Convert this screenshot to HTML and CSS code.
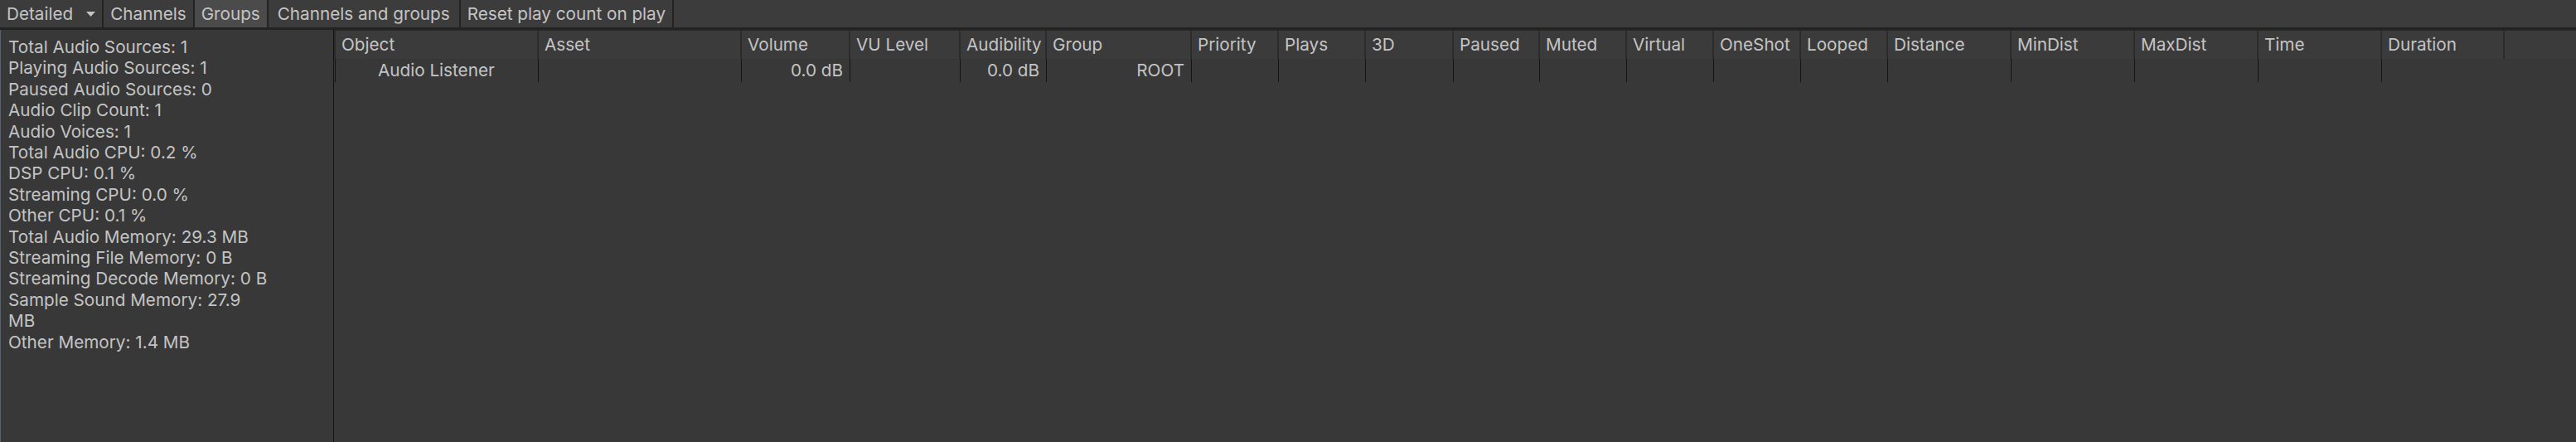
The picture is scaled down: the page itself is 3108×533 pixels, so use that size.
FILE: index.html
```html
<!DOCTYPE html>
<html lang="en">
<head>
<meta charset="utf-8">
<title>Audio Profiler</title>
<link rel="stylesheet" href="styles.css">
</head>
<body>
<div class="window">
  <div class="toolbar">
    <div class="tb-btn dropdown">
      <span>Detailed</span>
      <svg class="caret" width="11" height="6" viewBox="0 0 11 6"><polygon points="0,0 11,0 5.5,6" fill="#c4c4c4"/></svg>
    </div>
    <div class="tb-btn">Channels</div>
    <div class="tb-btn active">Groups</div>
    <div class="tb-btn wide">Channels and groups</div>
    <div class="tb-btn">Reset play count on play</div>
    <div class="tb-fill"></div>
  </div>
  <div class="main">
    <div class="stats">
      <div class="stats-list">
        <div>Total Audio Sources: 1</div>
        <div>Playing Audio Sources: 1</div>
        <div>Paused Audio Sources: 0</div>
        <div>Audio Clip Count: 1</div>
        <div>Audio Voices: 1</div>
        <div>Total Audio CPU: 0.2 %</div>
        <div>DSP CPU: 0.1 %</div>
        <div>Streaming CPU: 0.0 %</div>
        <div>Other CPU: 0.1 %</div>
        <div>Total Audio Memory: 29.3 MB</div>
        <div>Streaming File Memory: 0 B</div>
        <div>Streaming Decode Memory: 0 B</div>
        <div>Sample Sound Memory: 27.9<br>MB</div>
        <div>Other Memory: 1.4 MB</div>
      </div>
    </div>
    <div class="table">
      <div class="thead">
        <div class="th">Object</div>
        <div class="th">Asset</div>
        <div class="th">Volume</div>
        <div class="th">VU Level</div>
        <div class="th">Audibility</div>
        <div class="th">Group</div>
        <div class="th">Priority</div>
        <div class="th">Plays</div>
        <div class="th">3D</div>
        <div class="th">Paused</div>
        <div class="th">Muted</div>
        <div class="th">Virtual</div>
        <div class="th">OneShot</div>
        <div class="th">Looped</div>
        <div class="th">Distance</div>
        <div class="th">MinDist</div>
        <div class="th">MaxDist</div>
        <div class="th">Time</div>
        <div class="th">Duration</div>
        <div class="th filler"></div>
      </div>
      <div class="trow">
        <div class="td first indent">Audio Listener</div>
        <div class="td"></div>
        <div class="td num">0.0 dB</div>
        <div class="td"></div>
        <div class="td num">0.0 dB</div>
        <div class="td num">ROOT</div>
        <div class="td"></div>
        <div class="td"></div>
        <div class="td"></div>
        <div class="td"></div>
        <div class="td"></div>
        <div class="td"></div>
        <div class="td"></div>
        <div class="td"></div>
        <div class="td"></div>
        <div class="td"></div>
        <div class="td"></div>
        <div class="td"></div>
        <div class="td"></div>
        <div class="td-fill"></div>
      </div>
    </div>
  </div>
</div>
</body>
</html>
```

FILE: styles.css
```css
html, body {
  margin: 0;
  padding: 0;
  background: #383838;
}
body {
  font-family: Inter, "Noto Sans", sans-serif;
  font-size: 20.7px;
  color: #c4c4c4;
  width: 3108px;
  height: 533px;
  overflow: hidden;
}
.window {
  display: flex;
  flex-direction: column;
  height: 533px;
}
.toolbar {
  display: flex;
  height: 33px;
  background: #3c3c3c;
  border-bottom: 3px solid #232323;
  flex: none;
}
.tb-btn {
  display: flex;
  align-items: center;
  padding: 0 8px;
  border-right: 2px solid #232323;
  line-height: 33px;
  white-space: nowrap;
}
.tb-btn.wide {
  padding: 0 11px;
}
.tb-btn.active {
  background: #4b4b4b;
}
.dropdown {
  gap: 16px;
}
.caret {
  display: block;
}
.tb-fill {
  flex: 1;
}
.main {
  flex: 1;
  display: flex;
  min-height: 0;
}
.stats {
  width: 403px;
  box-sizing: border-box;
  flex: none;
  border-left: 1px solid #5b626c;
  border-right: 1px solid #121212;
  padding: 8px 0 0 9px;
  background: #383838;
}
.stats-list {
  line-height: 25.4px;
}
.table {
  flex: 1;
  border-top: 1px solid #2a2a2a;
  display: flex;
  flex-direction: column;
}
.thead, .trow {
  display: grid;
  grid-template-columns: 245px 245px 131px 133px 104px 175px 105px 105px 106px 104px 105px 105px 105px 105px 149px 149px 149px 149px 148px 1fr;
}
.thead {
  height: 34px;
  background: #3b3b3b;
}
.th {
  border-left: 2px solid #2b2b2b;
  padding-left: 7px;
  line-height: 34px;
  white-space: nowrap;
  overflow: hidden;
}
.trow {
  height: 28px;
}
.td {
  box-shadow: inset 1px 0 #383838, inset 2px 0 #141414;
  line-height: 28px;
  white-space: nowrap;
  overflow: hidden;
  padding: 0 7px 0 9px;
}
.td.num {
  text-align: right;
}
.td.indent {
  padding-left: 53px;
}
```
